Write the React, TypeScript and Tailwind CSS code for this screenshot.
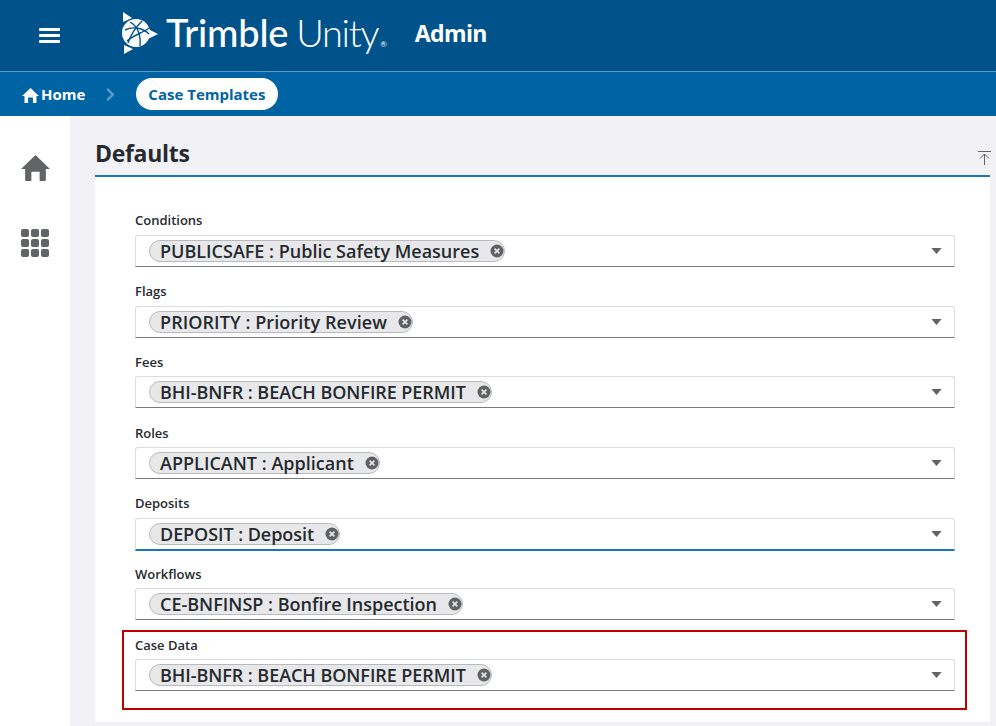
import React from 'react';

const FIELDS = [
  { label: 'Conditions', value: 'PUBLICSAFE : Public Safety Measures', spacing: '', nudge: '' },
  { label: 'Flags', value: 'PRIORITY : Priority Review', spacing: 'tracking-[0.08px]', nudge: '' },
  { label: 'Fees', value: 'BHI-BNFR : BEACH BONFIRE PERMIT', spacing: 'tracking-[-0.06px]', nudge: '' },
  { label: 'Roles', value: 'APPLICANT : Applicant', spacing: 'tracking-[0.02px]', nudge: 'pt-[1px]' },
  { label: 'Deposits', value: 'DEPOSIT : Deposit', focused: true, spacing: 'tracking-[-0.06px]', nudge: '' },
  { label: 'Workflows', value: 'CE-BNFINSP : Bonfire Inspection', spacing: '', nudge: '' },
  { label: 'Case Data', value: 'BHI-BNFR : BEACH BONFIRE PERMIT', spacing: 'tracking-[-0.06px]', nudge: 'pt-[1px]' },
];

const HomeIcon = ({ className }: { className: string }) => (
  <svg viewBox="0 0 28 25" className={className} fill="currentColor">
    <path d="M14 0 L28 13.5 L24 13.5 L24 24 Q24 25 23 25 L18 25 L18 16 L10 16 L10 25 L5 25 Q4 25 4 24 L4 13.5 L0 13.5 Z" />
  </svg>
);

const TrimbleMark = () => (
  <svg viewBox="0 0 38 42" className="w-[38px] h-[42px]">
    <path d="M2 0 L11 6 L2 10 Z M27 17 L37 22 L27 27 Z M3 33 L12 37 L3 42 Z" fill="#fff" />
    <circle cx="15" cy="21" r="14" fill="#fff" />
    <g fill="none" stroke="#00538a" strokeWidth="1.4">
      <path d="M9 10 C16 14 20 22 19 34" />
      <path d="M21 9 C16 14 10 22 7 31" />
      <path d="M4 18 C12 14 22 16 28 22" />
      <path d="M6 29 C14 22 22 21 28 16" />
    </g>
  </svg>
);

const Clear = () => (
  <svg viewBox="0 0 14 14" className="w-[14px] h-[14px] ml-[11px] shrink-0">
    <circle cx="7" cy="7" r="6.5" fill="#5f6163" />
    <path d="M4.6 4.6 L9.4 9.4 M9.4 4.6 L4.6 9.4" stroke="#e6e7ea" strokeWidth="1.6" />
  </svg>
);

const Field = ({ label, value, focused, spacing, nudge }: { label: string; value: string; focused?: boolean; spacing: string; nudge: string }) => (
  <div className="h-[70.67px] shrink-0">
    <div className={`h-[19.7px] text-[13px] leading-[20px] font-semibold text-[#252a2e] ${nudge}`}>{label}</div>
    <div
      className={`mt-[5px] w-[820px] flex items-center pl-[13px] pr-[12px] bg-white rounded-t-[3px] border border-[#dcdcdf] ${
        focused ? 'h-[33px] border-b-2 border-b-[#1a76bb]' : 'h-[32px] border-b-[#77787b]'
      }`}
    >
      <div className="h-[22px] flex items-center pl-[10px] rounded-full bg-[#e8e8eb] border border-[#b9babd] text-[18px] font-semibold text-[#252a2e]">
        <span className={`whitespace-nowrap pt-[1px] ${spacing}`}>{value}</span>
        <Clear />
      </div>
      <svg viewBox="0 0 12 7" className="ml-auto w-[11px] h-[6px] text-[#616366]" fill="currentColor">
        <path d="M0 0 H12 L6 7 Z" />
      </svg>
    </div>
  </div>
);

export default function App() {
  return (
    <div className="relative w-[996px] h-[726px] overflow-hidden bg-[#f1f1f6] font-['Open_Sans',sans-serif]">
      <header className="h-[72px] bg-[#00538a] border-b border-[#5b9ac8] flex items-center text-white">
        <div className="ml-[39px] w-[21px] flex flex-col gap-[3.5px]">
          <span className="h-[2.5px] bg-white rounded-[1px]" />
          <span className="h-[2.5px] bg-white rounded-[1px]" />
          <span className="h-[2.5px] bg-white rounded-[1px]" />
        </div>
        <div className="ml-[61px] mb-[5px]">
          <TrimbleMark />
        </div>
        <div className="ml-[7px] mb-[7px] flex items-baseline font-['Lato',sans-serif] text-[38px] leading-none tracking-[-0.2px]">
          <span className="font-medium">Trimble</span>
          <span className="ml-[8px] font-light tracking-[-1.3px]">Unity</span>
          <span className="ml-[2px] text-[8px]">®</span>
        </div>
        <div className="ml-[28px] mb-[4px] text-[23px] font-bold tracking-[-0.6px]">Admin</div>
      </header>

      <nav className="h-[44px] bg-[#0063a3] flex items-center text-white">
        <HomeIcon className="ml-[22px] w-[17px] h-[15px] mt-[2px]" />
        <span className="ml-[2px] text-[15px] font-bold">Home</span>
        <svg viewBox="0 0 9 14" className="ml-[21px] w-[9px] h-[13px] text-[#5a9bcb]" fill="none" stroke="currentColor" strokeWidth="2.6">
          <path d="M1 1 L7 7 L1 13" />
        </svg>
        <div className="ml-[21px] h-[32px] pl-[12px] pr-[13px] flex items-center rounded-full bg-white text-[#0063a3] text-[15px] font-bold">
          Case Templates
        </div>
      </nav>

      <div className="flex h-[610px]">
        <aside className="w-[70px] bg-white flex flex-col items-center text-[#616366]">
          <HomeIcon className="mt-[39px] w-[29px] h-[26px]" />
          <div className="mt-[48px] grid grid-cols-3 gap-[2px]">
            {Array.from({ length: 9 }).map((_, i) => (
              <span key={i} className="w-[8px] h-[8px] rounded-[2px] bg-[#616366]" />
            ))}
          </div>
        </aside>

        <main className="ml-[25px] w-[895px]">
          <div className="relative h-[61px] border-b-2 border-[#1a76bb]">
            <h1 className="pt-[19px] text-[23px] leading-[37px] font-bold tracking-[-0.3px] text-[#252a2e]">Defaults</h1>
            <svg viewBox="0 0 13 14" className="absolute right-[-1px] top-[35px] w-[13px] h-[14px] text-[#616366]" fill="none" stroke="currentColor" strokeWidth="1">
              <path d="M0 0.5 H13 M6.5 14 V3 M2 7.5 L6.5 3 L11 7.5" />
            </svg>
          </div>
          <div className="h-[545px] bg-white pt-[33.3px] px-[40px] flex flex-col">
            {FIELDS.map((f) => (
              <Field key={f.label} {...f} />
            ))}
          </div>
        </main>
      </div>

      <div className="absolute left-[122px] top-[630px] w-[845px] h-[80px] border-2 border-[#c00000] pointer-events-none" />
    </div>
  );
}
